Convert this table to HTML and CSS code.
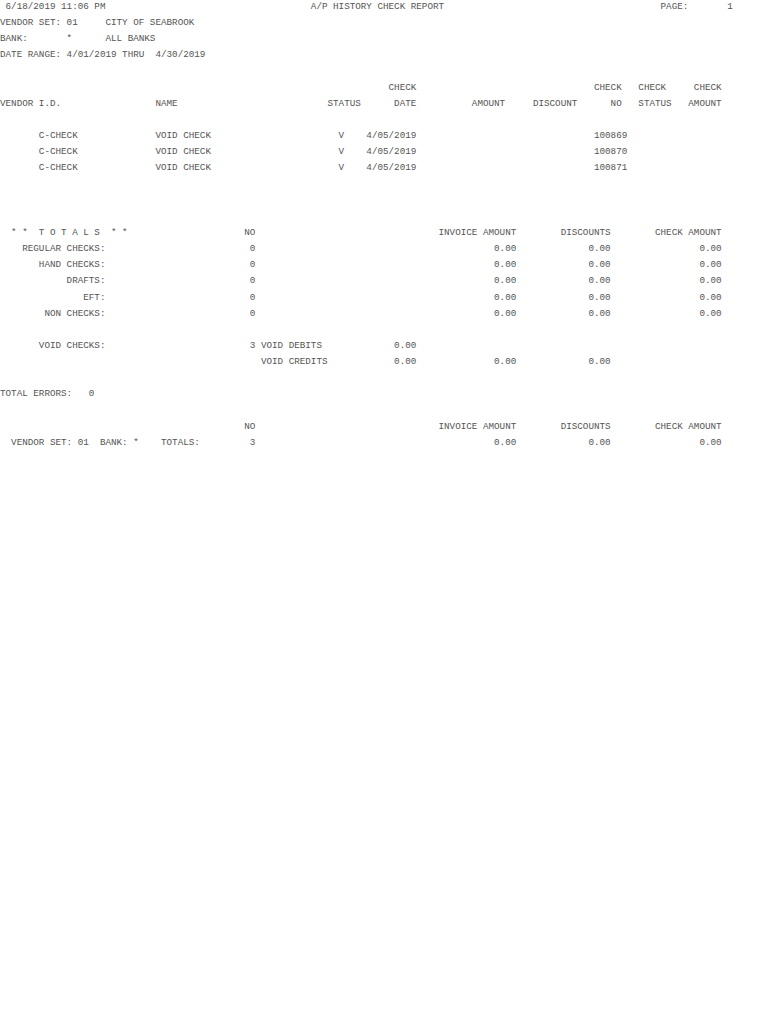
FILE: index.html
```html
<!DOCTYPE html>
<html lang="en">
<head>
<meta charset="utf-8">
<title>A/P History Check Report</title>
<link rel="stylesheet" href="styles.css">
</head>
<body>
<main class="report">
  <section class="block">
    <div class="line"> 6/18/2019 11:06 PM                                     A/P HISTORY CHECK REPORT                                       PAGE:       1</div>
    <div class="line">VENDOR SET: 01     CITY OF SEABROOK</div>
    <div class="line">BANK:       *      ALL BANKS</div>
    <div class="line">DATE RANGE: 4/01/2019 THRU  4/30/2019</div>
  </section>
  <section class="block gap1">
    <div class="line">                                                                      CHECK                                CHECK   CHECK     CHECK</div>
    <div class="line">VENDOR I.D.                 NAME                           STATUS      DATE          AMOUNT     DISCOUNT      NO   STATUS   AMOUNT</div>
  </section>
  <section class="block gap1">
    <div class="line">       C-CHECK              VOID CHECK                       V    4/05/2019                                100869</div>
    <div class="line">       C-CHECK              VOID CHECK                       V    4/05/2019                                100870</div>
    <div class="line">       C-CHECK              VOID CHECK                       V    4/05/2019                                100871</div>
  </section>
  <section class="block gap3">
    <div class="line">  * *  T O T A L S  * *                     NO                                 INVOICE AMOUNT        DISCOUNTS        CHECK AMOUNT</div>
    <div class="line">    REGULAR CHECKS:                          0                                           0.00             0.00                0.00</div>
    <div class="line">       HAND CHECKS:                          0                                           0.00             0.00                0.00</div>
    <div class="line">            DRAFTS:                          0                                           0.00             0.00                0.00</div>
    <div class="line">               EFT:                          0                                           0.00             0.00                0.00</div>
    <div class="line">        NON CHECKS:                          0                                           0.00             0.00                0.00</div>
  </section>
  <section class="block gap1">
    <div class="line">       VOID CHECKS:                          3 VOID DEBITS             0.00</div>
    <div class="line">                                               VOID CREDITS            0.00              0.00             0.00</div>
  </section>
  <section class="block gap1">
    <div class="line">TOTAL ERRORS:   0</div>
  </section>
  <section class="block gap1">
    <div class="line">                                            NO                                 INVOICE AMOUNT        DISCOUNTS        CHECK AMOUNT</div>
    <div class="line">  VENDOR SET: 01  BANK: *    TOTALS:         3                                           0.00             0.00                0.00</div>
  </section>
</main>
</body>
</html>
```

FILE: styles.css
```css
html, body {
  margin: 0;
  padding: 0;
  background: #ffffff;
}

.report {
  margin-top: -1px;
  font-family: "Liberation Mono", "Courier New", monospace;
  font-size: 9.25px;
  line-height: 16.15px;
  color: #555555;
  display: flex;
  flex-direction: column;
}

.block {
  display: flex;
  flex-direction: column;
}

.gap1 {
  margin-top: 16.15px;
}

.gap3 {
  margin-top: 48.45px;
}

.line {
  white-space: pre;
  height: 16.15px;
}
```
